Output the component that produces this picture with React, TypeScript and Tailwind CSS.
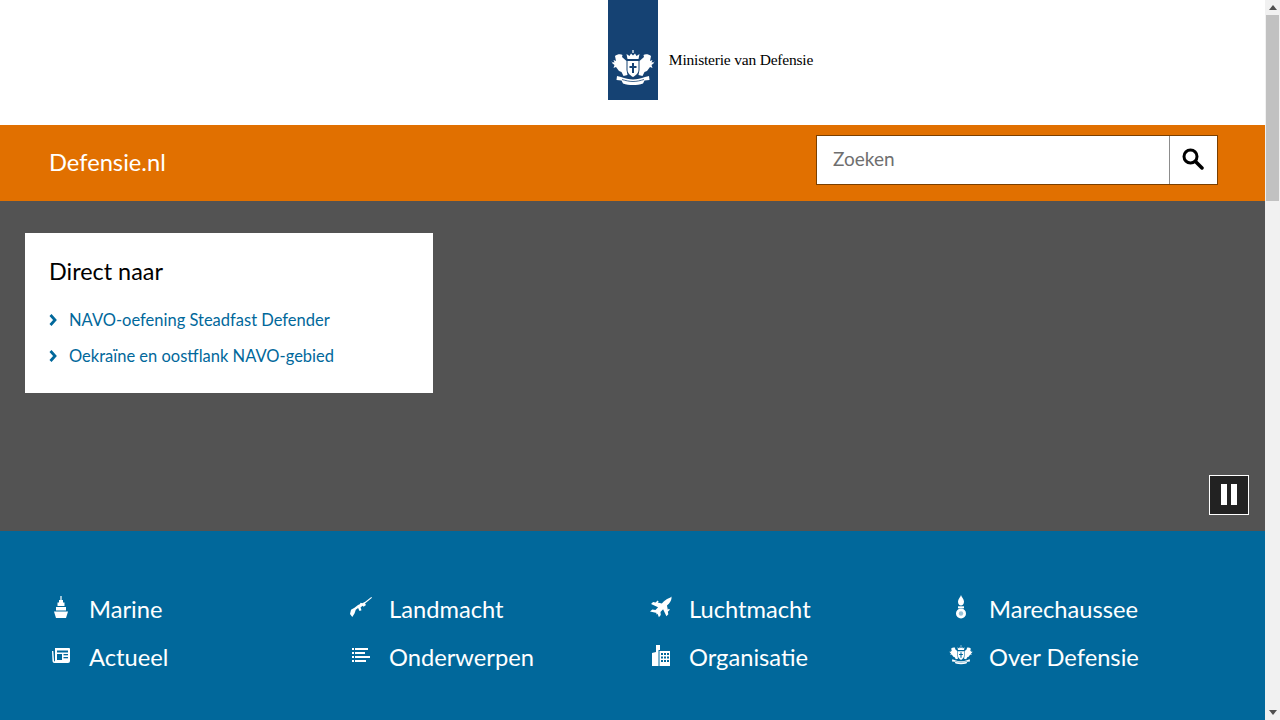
import React from "react";

const Ship = () => (
  <svg width="14" height="22" viewBox="0 0 14 22" fill="white">
    <rect x="6.400" y="0" width="1.200" height="4" />
    <path d="M5 4h4v2.500h1.500V10h-7V6.500H5z" />
    <path d="M2 11h10v3.500H2z" />
    <path d="M0 15.500h14L12 22H2z" />
  </svg>
);

const Rifle = () => (
  <svg width="22" height="20" viewBox="0 0 22 20" fill="white">
    <path d="M21.300 0l.7.8-7 5.800 1 1.400-2.400 1.800-1-1-2.100 1.600 1 2.900-2 .8-1.400-3-2.300 1.700-1.300 3.700L2.300 20 0 17l1-4.200 3.500-2 3.500-2.700 1.700-.9 1-1.500 1.500.5 3-1.500z" />
  </svg>
);

const Jet = () => (
  <svg width="22" height="22" viewBox="0 0 21 21" fill="white">
    <path d="M20.500 0.500c.3 2.500-.6 4.800-2.500 6.800l-1.800 1.800.8 4 1-1 1 1-2 2 .5 2.400-1.800 1.900-3.200-6.700-2.500 2.500.3 3-1.800 2.200-1.300-3.500-.7.700-.7-.7.700-.7L0 14.800l2.200-1.800 3 .3 2.500-2.500L1 7.600 2.900 5.800l2.400.5 2-2 1 1-1 1 4 .8 1.800-1.800c2-1.900 4.300-3 6.400-3.800z" />
  </svg>
);

const Grenade = () => (
  <svg width="12" height="24" viewBox="0 0 12 24" fill="white">
    <path d="M6 0c.4 2 3 4 3 6.500 0 2.500-1.300 4-3 4s-3-1.500-3-4C3 4 5.600 2 6 0z" />
    <rect x="3" y="11.300" width="6" height="2" />
    <circle cx="6" cy="18.500" r="5" />
    <circle cx="6" cy="18.500" r="2.200" fill="#01689b" opacity="0.4" />
  </svg>
);

const News = () => (
  <svg width="18" height="15" viewBox="0 0 18 15" fill="white">
    <path d="M3 0h14a1 1 0 0 1 1 1v12a2 2 0 0 1-2 2H2.500C1.300 15 .600 14 .500 13L0 3h1.300l.7 9.500c.1.600.4 1 .7 1 .3 0 .3-.4.300-1z" />
    <rect x="5" y="2.500" width="11" height="2" fill="#01689b" />
    <rect x="5" y="6" width="5" height="6" fill="#01689b" />
    <rect x="11.500" y="6" width="4.500" height="1.300" fill="#01689b" />
    <rect x="11.500" y="9" width="4.500" height="1.300" fill="#01689b" />
  </svg>
);

const ListIcon = () => (
  <svg width="18" height="14" viewBox="0 0 18 14" fill="white">
    <rect x="0" y="0" width="2" height="2" />
    <rect x="3" y="0" width="13" height="2" />
    <rect x="0" y="4" width="2" height="2" />
    <rect x="3" y="4" width="10" height="2" />
    <rect x="0" y="8" width="2" height="2" />
    <rect x="3" y="8" width="15" height="2" />
    <rect x="0" y="12" width="2" height="2" />
    <rect x="3" y="12" width="11" height="2" />
  </svg>
);

const Buildings = () => (
  <svg width="18" height="21" viewBox="0 0 18 21" fill="white">
    <path d="M4 7V0h4v5H6.500v16H0V8z" />
    <rect x="7.500" y="6" width="10.500" height="15" />
    <g fill="#01689b">
      <rect x="9" y="8" width="2" height="2" />
      <rect x="12" y="8" width="2" height="2" />
      <rect x="15" y="8" width="2" height="2" />
      <rect x="9" y="11.500" width="2" height="2" />
      <rect x="12" y="11.500" width="2" height="2" />
      <rect x="15" y="11.500" width="2" height="2" />
      <rect x="9" y="15" width="2" height="2" />
      <rect x="12" y="15" width="2" height="2" />
      <rect x="15" y="15" width="2" height="2" />
    </g>
  </svg>
);

// coat of arms, used in white on the logo bar and in the nav
const Arms = ({ width, height, bg }: { width: number; height: number; bg: string }) => (
  <svg width={width} height={height} viewBox="0 0 44 36" fill="white">
    {/* crown */}
    <rect x="21.400" y="0" width="1.200" height="3" />
    <path d="M16.500 9l-1-5 3 2 1.500-2.500 2 2 2-2L25.500 6l3-2-1 5z" />
    {/* shield */}
    <path d="M16.500 11h11v9c0 3.500-3 5.500-5.500 7-2.500-1.500-5.500-3.500-5.500-7z" />
    <path d="M21 13h2v3h2.500v2H23v5h-2v-5h-2.500v-2H21z" fill={bg} />
    {/* lions */}
    <path d="M4 6c2-2 6-2.500 7.500-1l-.5 2 4.500 4v9l1 5-4 1-2-4-2.500-1-3-4-2.500 1 1-3-2.500-2 2.500-.5-1-2.500 2.500 1z" />
    <path d="M40 6c-2-2-6-2.500-7.500-1l.5 2-4.500 4v9l-1 5 4 1 2-4 2.500-1 3-4 2.500 1-1-3 2.500-2-2.500-.5 1-2.500-2.500 1z" />
    <path d="M0 11.500l4 1.500-.8 1zM44 11.500l-4 1.500.8 1z" />
    {/* ribbon */}
    <path d="M6 26l4 1c4 1.500 8 2.500 12 2.500s8-1 12-2.500l4-1 .5 4-5 .5-1.500 3c-3 1-6.500 1.500-10 1.500S15 34.500 12 33.500L10.500 30.500l-5-.5z" />
    <path d="M11 29.500c3.500 1 7 2 11 2s7.500-1 11-2" fill="none" stroke={bg} strokeWidth="0.800" />
  </svg>
);

const items = [
  { label: "Marine", icon: <Ship /> },
  { label: "Landmacht", icon: <Rifle /> },
  { label: "Luchtmacht", icon: <Jet /> },
  { label: "Marechaussee", icon: <Grenade /> },
  { label: "Actueel", icon: <News /> },
  { label: "Onderwerpen", icon: <ListIcon /> },
  { label: "Organisatie", icon: <Buildings /> },
  { label: "Over Defensie", icon: <Arms width={24} height={22} bg="#01689b" /> },
];

const Chevron = () => (
  <svg width="8" height="12" viewBox="0 0 8 12" fill="none" stroke="#01689b" strokeWidth="2.800">
    <path d="M1.500 1l4.500 5-4.500 5" />
  </svg>
);

export default function App() {
  return (
    <div className="flex h-screen overflow-hidden bg-white font-['Lato',sans-serif]">
      <div className="flex w-[1265px] flex-col">
        {/* Logo */}
        <header className="flex h-[125px] justify-center pl-[156px]">
          <div className="flex h-[100px] items-start">
            <div className="flex h-[100px] w-[50px] items-end justify-center bg-[#154273] pb-[14px]">
              <Arms width={44} height={36} bg="#154273" />
            </div>
            <span className="mt-[51px] ml-[11px] font-['Liberation_Serif',serif] text-[15.500px] leading-[18px] tracking-[-0.2px] text-black">
              Ministerie van Defensie
            </span>
          </div>
        </header>

        {/* Orange bar */}
        <div className="flex h-[76px] items-start justify-between bg-[#e17000] pt-[10px] pr-[47px] pl-[49px]">
          <span className="mt-[9px] text-[23.700px] leading-[36px] text-white">Defensie.nl</span>
          <div className="flex h-[50px] w-[402px] border border-[#7a3f00] bg-white">
            <span className="flex flex-1 items-center border-r border-[#8c8c8c] pb-[2px] pl-4 text-[19px] text-[#6f6f6f]">
              Zoeken
            </span>
            <span className="flex w-[47px] items-center justify-center pr-[2px] pb-[2px]">
              <svg width="22" height="22" viewBox="0 0 22 22" fill="none" stroke="black">
                <circle cx="8.500" cy="8.500" r="6.500" strokeWidth="3" />
                <path d="M13.500 13.500L20 20" strokeWidth="3.500" strokeLinecap="round" />
              </svg>
            </span>
          </div>
        </div>

        {/* Hero */}
        <section className="flex h-[330px] flex-col justify-between bg-[#535353] pt-8 pr-4 pb-4 pl-[25px]">
          <div className="h-40 w-[408px] bg-white px-6 pt-[18px]">
            <h2 className="text-[23.400px] leading-[40px] text-black">Direct naar</h2>
            <ul className="mt-[17px] flex flex-col gap-[12px] text-[16.500px] leading-6 text-[#01689b]">
              <li className="flex items-center gap-[12px]">
                <Chevron />
                NAVO-oefening Steadfast Defender
              </li>
              <li className="flex items-center gap-[12px]">
                <Chevron />
                Oekraïne en oostflank NAVO-gebied
              </li>
            </ul>
          </div>
          <button className="flex h-10 w-10 items-center justify-center gap-[4px] self-end border border-white bg-[#222222]">
            <span className="mb-[2px] h-[21px] w-[6px] bg-white" />
            <span className="mb-[2px] h-[21px] w-[6px] bg-white" />
          </button>
        </section>

        {/* Navigation */}
        <nav className="grid flex-1 grid-cols-[repeat(4,300px)] content-start gap-y-3 bg-[#01689b] pt-[60px] pl-[36px]">
          {items.map((item) => (
            <div key={item.label} className="flex h-9 items-center">
              <span className="flex h-full w-[53px] items-center justify-center pr-[3px] pb-1">{item.icon}</span>
              <span className="pt-[2px] text-[23.700px] text-white">{item.label}</span>
            </div>
          ))}
        </nav>
      </div>

      {/* Scrollbar */}
      <div className="flex w-[15px] flex-col items-center bg-[#f1f1f1] pt-[5px]">
        <div className="h-0 w-0 border-x-[4px] border-b-[5px] border-x-transparent border-b-[#505050]" />
        <div className="mt-[5px] h-[186px] w-[13px] bg-[#c1c1c1]" />
        <div className="mt-auto mb-[5px] h-0 w-0 border-x-[4px] border-t-[5px] border-x-transparent border-t-[#505050]" />
      </div>
    </div>
  );
}
